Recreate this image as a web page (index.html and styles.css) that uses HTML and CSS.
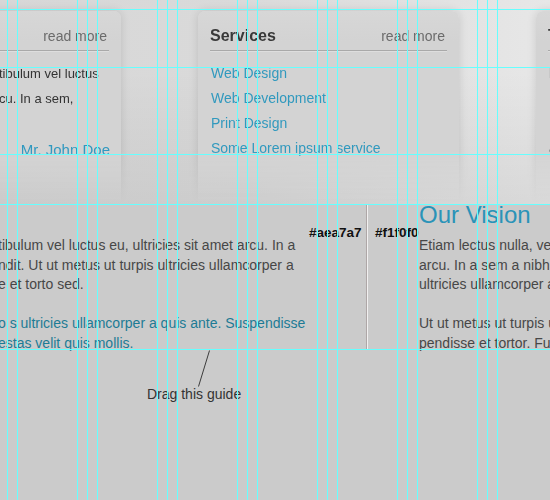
FILE: index.html
```html
<!DOCTYPE html>
<html lang="en">
<head>
<meta charset="utf-8">
<title>Guides</title>
<link rel="stylesheet" href="styles.css">
</head>
<body>
<div class="page">
  <section class="top">
    <div class="cards">
      <article class="card card-narrow">
        <header class="card-head">
          <a class="more">read more</a>
        </header>
        <p class="quote">tibulum vel luctus<br>cu. In a sem,</p>
        <p class="sign">Mr. John Doe</p>
      </article>
      <article class="card">
        <header class="card-head">
          <h3 class="card-title">Services</h3>
          <a class="more">read more</a>
        </header>
        <ul class="links">
          <li>Web Design</li>
          <li>Web Development</li>
          <li>Print Design</li>
          <li>Some Lorem ipsum service</li>
        </ul>
      </article>
      <article class="card">
        <header class="card-head">
          <h3 class="card-title">Twitter</h3>
          <a class="more">read more</a>
        </header>
        <ul class="tweets">
          <li><strong>Lorem</strong> ipsum dolor</li>
          <li class="handle">@themeforest</li>
          <li>Lorem ipsum sit amet</li>
          <li>about 2 hours ago</li>
        </ul>
      </article>
    </div>
  </section>

  <section class="bottom">
    <div class="col-left">
      <p>tibulum vel luctus eu, ultricies sit amet arcu. In a<br>ndit. Ut ut metus ut turpis ultricies ullamcorper a<br>e et torto sed.</p>
      <p class="teal">o s ultricies ullamcorper a quis ante. Suspendisse<br>estas velit quis mollis.</p>
    </div>
    <div class="label label-a">#aea7a7</div>
    <div class="sep"></div>
    <div class="label label-b">#f1f0f0</div>
    <div class="col-right">
      <h2 class="vision">Our Vision</h2>
      <p>Etiam lectus nulla, vestibulum<br>arcu. In a sem a nibh blandit<br>ultricies ullamcorper a quis</p>
      <p>Ut ut metus ut turpis ultricies<br>pendisse et tortor. Fusce</p>
    </div>
  </section>

  <div class="note">
    <svg class="pointer" width="550" height="38" viewBox="0 0 550 38">
      <line x1="209.5" y1="1.5" x2="198.5" y2="37.5" stroke="#3c3c3c" stroke-width="1"/>
    </svg>
    <div class="note-text">Drag this guide</div>
  </div>

  <svg class="guides" width="550" height="500" viewBox="0 0 550 500" shape-rendering="crispEdges">
    <g stroke="#66ffff" stroke-width="1">
      <line x1="7.5" y1="0" x2="7.5" y2="500"/>
      <line x1="17.5" y1="0" x2="17.5" y2="500"/>
      <line x1="77.5" y1="0" x2="77.5" y2="500"/>
      <line x1="87.5" y1="0" x2="87.5" y2="500"/>
      <line x1="97.5" y1="0" x2="97.5" y2="500"/>
      <line x1="157.5" y1="0" x2="157.5" y2="500"/>
      <line x1="167.5" y1="0" x2="167.5" y2="500"/>
      <line x1="177.5" y1="0" x2="177.5" y2="500"/>
      <line x1="237.5" y1="0" x2="237.5" y2="500"/>
      <line x1="247.5" y1="0" x2="247.5" y2="500"/>
      <line x1="257.5" y1="0" x2="257.5" y2="500"/>
      <line x1="317.5" y1="0" x2="317.5" y2="500"/>
      <line x1="327.5" y1="0" x2="327.5" y2="500"/>
      <line x1="337.5" y1="0" x2="337.5" y2="500"/>
      <line x1="397.5" y1="0" x2="397.5" y2="500"/>
      <line x1="407.5" y1="0" x2="407.5" y2="500"/>
      <line x1="417.5" y1="0" x2="417.5" y2="500"/>
      <line x1="477.5" y1="0" x2="477.5" y2="500"/>
      <line x1="487.5" y1="0" x2="487.5" y2="500"/>
      <line x1="497.5" y1="0" x2="497.5" y2="500"/>
      <line x1="0" y1="9.5" x2="550" y2="9.5"/>
      <line x1="0" y1="67.5" x2="550" y2="67.5"/>
      <line x1="0" y1="154.5" x2="550" y2="154.5"/>
      <line x1="0" y1="204.5" x2="550" y2="204.5"/>
      <line x1="0" y1="349.5" x2="550" y2="349.5"/>
    </g>
  </svg>
</div>
</body>
</html>
```

FILE: styles.css
```css
html, body {
  margin: 0;
  padding: 0;
}

body {
  background: #cbcbcb;
  font-family: "Liberation Sans", Arial, Helvetica, sans-serif;
}

.page {
  position: relative;
  width: 550px;
  height: 500px;
  overflow: hidden;
}

/* ---------- top band with cards ---------- */
.top {
  height: 204px;
  overflow: hidden;
  background:
    linear-gradient(to bottom, rgba(0, 0, 0, 0) 35%, rgba(0, 0, 0, 0.06) 100%),
    linear-gradient(to right, #d7d7d7 0%, #dadada 45%, #e7e7e7 100%);
}

.cards {
  display: flex;
  gap: 77px;
  margin-left: -14px;
  padding-top: 11px;
  height: 193px;
  -webkit-mask-image: linear-gradient(to bottom, #000 150px, rgba(0, 0, 0, 0) 204px);
  mask-image: linear-gradient(to bottom, #000 150px, rgba(0, 0, 0, 0) 204px);
}

.card {
  flex: none;
  box-sizing: border-box;
  width: 261px;
  height: 200px;
  padding: 15px 12px 0 12px;
  background: linear-gradient(to bottom, #d7d7d7 0, #d3d3d3 30px, #d3d3d3 100%);
  border-radius: 7px 7px 0 0;
  box-shadow: 0 0 10px rgba(0, 0, 0, 0.13);
}

.card-narrow {
  width: 135px;
  padding-left: 13px;
}

.card-head {
  display: flex;
  align-items: baseline;
  justify-content: space-between;
  padding-bottom: 4px;
  border-bottom: 1px solid #a9a9a9;
  box-shadow: 0 1px 0 #dedede;
}

.card-title {
  margin: 0;
  font-size: 16px;
  line-height: 20px;
  font-weight: bold;
  color: #393939;
}

.more {
  margin-left: auto;
  padding-right: 2px;
  font-size: 14px;
  line-height: 20px;
  color: #6b6b6b;
}

.quote {
  margin: 0;
  padding-top: 10px;
  font-size: 13px;
  line-height: 25px;
  color: #333333;
  white-space: nowrap;
}

.sign {
  margin: 26px -1px 0 0;
  text-align: right;
  font-size: 15px;
  line-height: 25px;
  color: #2f98bf;
}

.links,
.tweets {
  list-style: none;
  margin: 0;
  padding: 10px 0 0 1px;
  font-size: 14px;
  line-height: 25px;
  white-space: nowrap;
}

.links {
  color: #3199be;
}

.tweets {
  color: #3a3a3a;
}

.tweets .handle {
  color: #3199be;
}

/* ---------- bottom content ---------- */
.bottom {
  display: flex;
  align-items: flex-start;
  height: 145px;
}

.col-left,
.col-right {
  font-size: 14px;
  line-height: 19.5px;
  color: #474747;
  white-space: nowrap;
}

.col-left p,
.col-right p {
  margin: 0;
}

.col-left p + p,
.col-right p + p {
  margin-top: 19.5px;
}

.col-left {
  box-sizing: border-box;
  flex: none;
  width: 311px;
  margin-left: -2px;
  padding-top: 32.4px;
  overflow: hidden;
}

.col-left .teal {
  color: #1d7b95;
}

.label {
  flex: none;
  box-sizing: border-box;
  padding-top: 21px;
  font-size: 13.5px;
  line-height: 16px;
  font-weight: bold;
  color: #111111;
  white-space: nowrap;
}

.label-a {
  width: 57px;
}

.label-b {
  width: 51px;
  padding-left: 7px;
}

.sep {
  flex: none;
  width: 2px;
  height: 145px;
  background: linear-gradient(to right, #aea7a7 50%, #f1f0f0 50%);
}

.col-right {
  flex: none;
}

.vision {
  margin: 0 0 10.4px;
  font-size: 24px;
  line-height: 22px;
  font-weight: normal;
  color: #2a93b8;
}

/* ---------- annotation ---------- */
.pointer {
  display: block;
}

.note-text {
  margin-top: -1px;
  padding-left: 147px;
  font-size: 14px;
  line-height: 16px;
  color: #333333;
}

/* ---------- guides overlay ---------- */
.guides {
  position: absolute;
  top: 0;
  left: 0;
  pointer-events: none;
}
```
